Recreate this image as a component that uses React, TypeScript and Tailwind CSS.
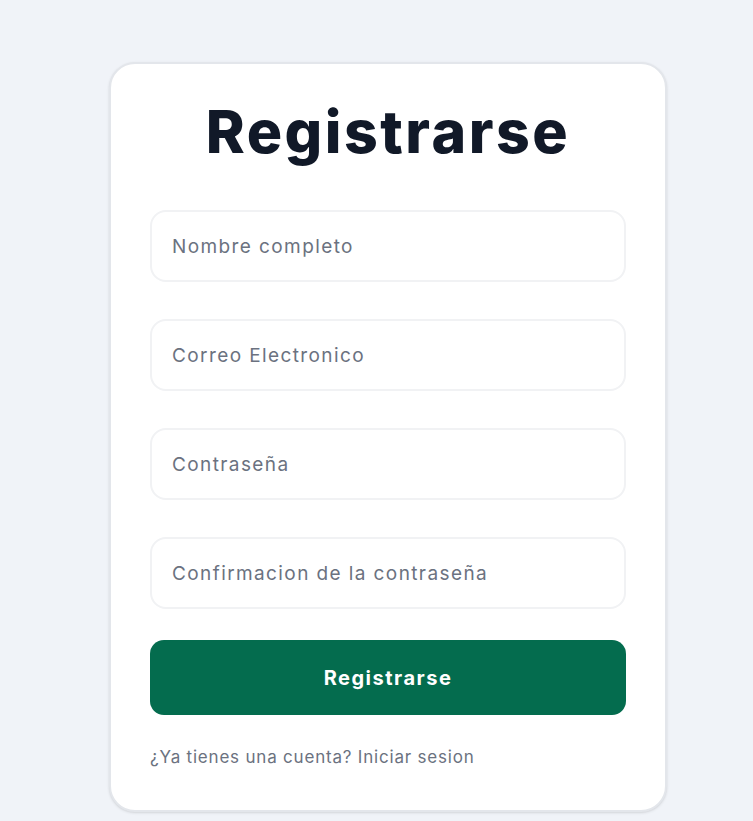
export default function App() {
  const fields = [
    'Nombre completo',
    'Correo Electronico',
    'Contraseña',
    'Confirmacion de la contraseña',
  ];
  return (
    <div className="min-h-screen bg-[#f0f3f8] pl-[23px] pt-[62px] font-['Inter',sans-serif] flex justify-center items-start">
      <div className="w-[558px] rounded-[26px] border-2 border-[#e3e6eb] bg-white px-[39px] pt-[33px] pb-[41px] shadow-sm">
        <h1 className="text-center text-[59px] leading-[70px] font-extrabold tracking-[2.5px] text-[#111928]">
          Registrarse
        </h1>
        <form className="mt-[43px] flex flex-col">
          {fields.map((f) => (
            <input
              key={f}
              type={f.startsWith('Contra') || f.startsWith('Confirm') ? 'password' : 'text'}
              placeholder={f}
              className="mb-[37px] h-[72px] w-full rounded-[16px] border-2 border-[#f1f2f4] bg-white px-[20px] text-[19px] tracking-[1.4px] text-gray-900 placeholder:text-[#6b7280] outline-none"
            />
          ))}
          <button
            type="button"
            className="-mt-[6px] h-[75px] w-full rounded-[14px] bg-[#046c4e] text-[20px] font-bold tracking-[1.5px] text-white"
          >
            Registrarse
          </button>
        </form>
        <p className="mt-[30px] text-[17px] leading-[24px] tracking-[0.8px] text-[#6b7280]">
          ¿Ya tienes una cuenta? Iniciar sesion
        </p>
      </div>
    </div>
  );
}
